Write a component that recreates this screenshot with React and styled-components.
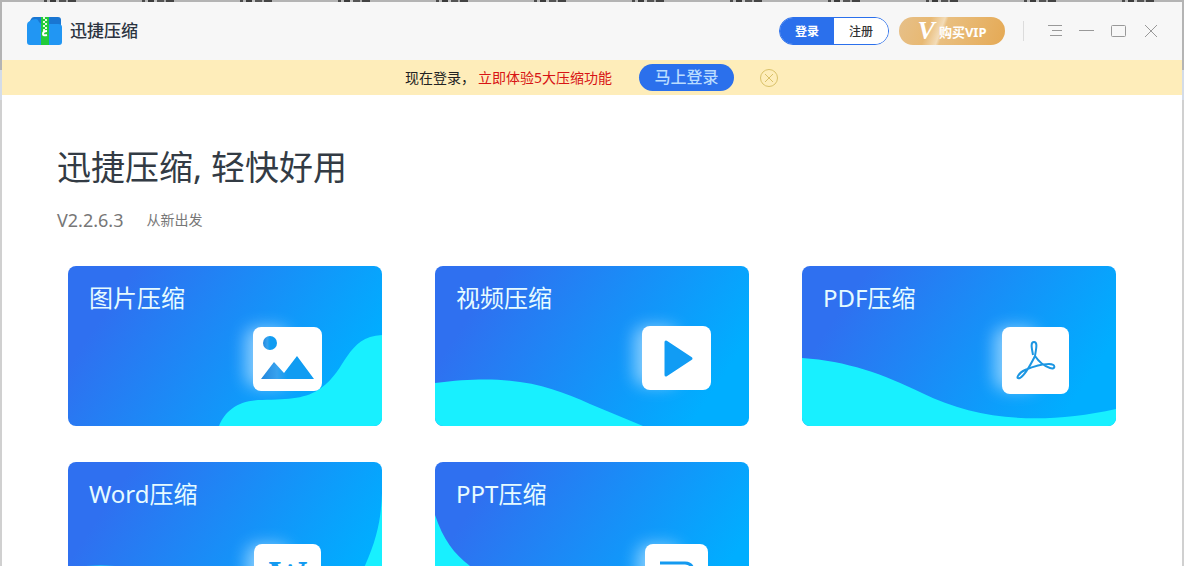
import React from "react";
import styled, { createGlobalStyle } from "styled-components";

const GlobalStyle = createGlobalStyle`
  * {
    box-sizing: border-box;
  }
  body {
    margin: 0;
    font-family: "Noto Sans", "Noto Sans CJK SC", sans-serif;
  }
  button {
    font-family: inherit;
    border: none;
    padding: 0;
    cursor: pointer;
    background: none;
  }
`;

const cards = [
  {
    title: "图片压缩",
    wave:
      "M151 160C157 145 170 134 194 134C222 133 238 133 253 122C279 104 278 71 314 69V160Z",
    tile: { x: 185, y: 61, width: 69, height: 64 },
    glyph: (
      <g fill="url(#glyph)">
        <circle cx="202" cy="77" r="7" />
        <path d="M193 113L206 96L216 107L229 90L246 113Z" />
      </g>
    )
  },
  {
    title: "视频压缩",
    wave: "M0 117C78 107 115 120 155 138L208 160H0Z",
    tile: { x: 207, y: 60, width: 69, height: 64 },
    glyph: (
      <path
        d="M231 76V109L256 92.500Z"
        fill="#119cf4"
        stroke="#119cf4"
        strokeWidth="3"
        strokeLinejoin="round"
      />
    )
  },
  {
    title: "PDF压缩",
    wave: "M0 92C45 95 81 108 120 127C177 155 241 159 314 143V160H0Z",
    tile: { x: 200, y: 61, width: 67, height: 67 },
    glyph: (
      <path
        d="M231 89C230 83 228 76 232 76C236 76 234 83 233 90C237 96 242 100 248 102C254 104 254 98 247 98C239 98 230 101 223 104C216 107 213 114 218 112C223 109 229 98 233 90"
        fill="none"
        stroke="#1c96e2"
        strokeWidth="2"
        strokeLinejoin="round"
      />
    )
  },
  {
    title: "Word压缩",
    wave: "M314 31C313 60 308 83 290 118L270 160H314ZM0 106Q32 101 66 106L90 160H0Z",
    tile: { x: 186, y: 82, width: 67, height: 67 },
    glyph: (
      <text
        x="220"
        y="126"
        textAnchor="middle"
        fontFamily="Liberation Serif"
        fontWeight="bold"
        fontSize="39"
        fill="#149af0"
      >
        W
      </text>
    )
  },
  {
    title: "PPT压缩",
    wave: "M0 53C8 77 19 92 35 104C58 122 82 140 90 160H0Z",
    tile: { x: 210, y: 82, width: 63, height: 67 },
    glyph: (
      <path
        d="M225 101H250Q258 101 258 110T250 119H234V132"
        fill="none"
        stroke="#149af0"
        strokeWidth="3"
      />
    )
  }
];

const Logo = () => (
  <svg width="35" height="28" viewBox="0 0 35 28" aria-hidden="true">
    <path d="M4 2Q5 0 7 0H31Q34 0 34 3V12H2V6Z" fill="#1976d2" />
    <path
      d="M3 4Q5 2 9 2Q11 2 12 5Q13 7 16 7H31Q35 7 35 10V25Q35 28 32 28H3Q0 28 0 25V8Q0 5 3 4Z"
      fill="#2196f3"
    />
    <path d="M14 0H22V28H14Z" fill="#22cb3a" />
    <path
      d="M16 1h2M18 3h2M16 5h2M18 7h2M16 9h2M18 11h2M16 13h2"
      stroke="#e5ffd8"
      strokeWidth="2"
    />
    <path d="M20 14Q16 14 16 17Q16 19 20 18" stroke="#fff" strokeWidth="2" fill="none" />
  </svg>
);

const CardArt = ({ wave, tile, glyph }) => (
  <Art viewBox="0 0 314 160" preserveAspectRatio="none" aria-hidden="true">
    <rect
      x={tile.x - 8}
      y={tile.y}
      width="44"
      height={tile.height - 4}
      rx="12"
      fill="#b4e0ff"
      opacity="0.7"
      filter="url(#glow)"
    />
    <path d={wave} fill="#18f0ff" />
    <rect {...tile} rx="8" fill="#fff" />
    {glyph}
  </Art>
);

const App = () => (
  <Desktop>
    <GlobalStyle />
    <Defs aria-hidden="true">
      <filter id="glow" x="-60%" y="-60%" width="220%" height="220%">
        <feGaussianBlur stdDeviation="8" />
      </filter>
      <linearGradient id="glyph">
        <stop offset="0" stopColor="#2286dc" />
        <stop offset="0.3" stopColor="#38a2ee" />
        <stop offset="0.5" stopColor="#109cf2" />
        <stop offset="1" stopColor="#109cf2" />
      </linearGradient>
    </Defs>
    <Window>
      <Header>
        <Brand>
          <Logo />
          迅捷压缩
        </Brand>
        <Account>
          <AccountButton $active>登录</AccountButton>
          <AccountButton>注册</AccountButton>
        </Account>
        <VipButton>
          <VipMark>V</VipMark>
          购买VIP
        </VipButton>
        <Divider />
        <WindowButton aria-label="菜单">
          <svg width="16" height="16">
            <path d="M1 2.500H15M5 7.500H15M3 12.500H15" />
          </svg>
        </WindowButton>
        <WindowButton aria-label="最小化">
          <svg width="16" height="16">
            <path d="M0 7.500H15" />
          </svg>
        </WindowButton>
        <WindowButton aria-label="最大化">
          <svg width="16" height="16">
            <rect x="0.500" y="2.500" width="14" height="11" rx="1" />
          </svg>
        </WindowButton>
        <WindowButton aria-label="关闭">
          <svg width="16" height="16">
            <path d="M2 2L14 14M14 2L2 14" />
          </svg>
        </WindowButton>
      </Header>
      <Banner>
        <span>现在登录，</span>
        <Promo>立即体验5大压缩功能</Promo>
        <LoginButton>马上登录</LoginButton>
        <DismissButton aria-label="关闭提示">
          <svg width="20" height="20">
            <circle cx="10" cy="10" r="8.500" />
            <path d="M6 6L14 14M14 6L6 14" />
          </svg>
        </DismissButton>
      </Banner>
      <Content>
        <Title>迅捷压缩, 轻快好用</Title>
        <Version>
          V2.2.6.3
          <Slogan>从新出发</Slogan>
        </Version>
        <Grid>
          {cards.map(card => (
            <Card key={card.title}>
              <CardArt {...card} />
              <CardTitle>{card.title}</CardTitle>
            </Card>
          ))}
        </Grid>
      </Content>
    </Window>
  </Desktop>
);

const Desktop = styled.div`
  height: 100vh;
  padding: 2px 2px 0;
  overflow: hidden;
  background:
    repeating-linear-gradient(
      90deg,
      transparent 0 44px,
      #4c4c4c 44px 47px,
      #b8b8b8 47px 50px,
      #3c3c3c 50px 56px,
      #c4c4c4 56px 59px,
      #555 59px 66px,
      #aaa 66px 68px,
      #444 68px 76px,
      transparent 76px 98px
    ) 0 0 / 100% 2px no-repeat,
    linear-gradient(#b4b4b4 0 70px, #d4dce8 70px 100px, #d0d0d0 100px);
`;

const Defs = styled.svg`
  display: block;
  width: 0;
  height: 0;
`;

const Window = styled.div`
  display: flex;
  flex-direction: column;
  height: 100%;
  background: #fff;
`;

const Header = styled.header`
  display: flex;
  flex: none;
  align-items: center;
  height: 58px;
  padding: 0 15px 0 25px;
  background: #f7f7f7;
`;

const Brand = styled.div`
  display: flex;
  align-items: center;
  gap: 8px;
  margin-right: auto;
  font-size: 17px;
  font-weight: 500;
  line-height: 28px;
  color: #2b3340;
`;

const Account = styled.div`
  display: flex;
  width: 110px;
  height: 28px;
  margin-right: 10px;
  overflow: hidden;
  border: 1px solid #2b70ec;
  border-radius: 14px;
`;

const AccountButton = styled.button`
  flex: 1;
  font-size: 12px;
  font-weight: ${props => (props.$active ? 700 : 500)};
  color: ${props => (props.$active ? "#fff" : "#333")};
  background: ${props => (props.$active ? "#2b70ec" : "#fff")};
`;

const VipButton = styled.button`
  display: flex;
  align-items: center;
  justify-content: center;
  gap: 4px;
  width: 106px;
  height: 28px;
  border-radius: 14px;
  font-size: 13px;
  font-weight: 700;
  color: #fff;
  background: linear-gradient(
    110deg,
    #e6c08a 0%,
    #e8b973 28%,
    #f3dcb8 40%,
    #e9bf80 43%,
    #e5a954 100%
  );
`;

const VipMark = styled.span`
  font-family: "Liberation Serif", serif;
  font-size: 26px;
  font-style: italic;
  line-height: 28px;
`;

const Divider = styled.span`
  width: 1px;
  height: 20px;
  margin: 0 15px 0 18px;
  background: #dcdcdc;
`;

const WindowButton = styled.button`
  display: flex;
  align-items: center;
  justify-content: center;
  width: 32px;
  height: 32px;

  svg {
    fill: none;
    stroke: #999;
  }
`;

const Banner = styled.div`
  display: flex;
  flex: none;
  align-items: center;
  justify-content: center;
  height: 35px;
  font-size: 14px;
  line-height: 20px;
  color: #222;
  background: #feedba;
`;

const Promo = styled.span`
  margin-left: 3px;
  color: #d81414;
`;

const LoginButton = styled.button`
  width: 95px;
  height: 27px;
  margin: 0 25px 0 27px;
  border-radius: 14px;
  font-size: 16px;
  font-weight: 500;
  line-height: 27px;
  color: #b9dcff;
  background: #2b70ec;
`;

const DismissButton = styled.button`
  display: flex;

  svg {
    fill: none;
    stroke: #d9c169;
  }
`;

const Content = styled.main`
  padding: 48px 66px 0;
`;

const Title = styled.h1`
  margin: 0 0 0 -11px;
  font-size: 34px;
  font-weight: 400;
  line-height: 48px;
  color: #333b44;
`;

const Version = styled.div`
  display: flex;
  align-items: center;
  gap: 23px;
  margin: 16px 0 33px -11px;
  font-size: 18px;
  line-height: 26px;
  color: #777;
`;

const Slogan = styled.span`
  font-size: 14px;
`;

const Grid = styled.div`
  display: grid;
  grid-template-columns: repeat(3, 1fr);
  gap: 36px 53px;
`;

const Card = styled.button`
  display: grid;
  height: 160px;
  overflow: hidden;
  border-radius: 8px;
  background: linear-gradient(124deg, #2f70f0 16%, #00aeff 86%);
`;

const CardTitle = styled.span`
  grid-area: 1 / 1;
  align-self: start;
  justify-self: start;
  padding: 15px 21px;
  font-size: 24px;
  line-height: 34px;
  color: #e6fbff;
`;

const Art = styled.svg`
  grid-area: 1 / 1;
  width: 100%;
  height: 160px;
`;

export default App;
